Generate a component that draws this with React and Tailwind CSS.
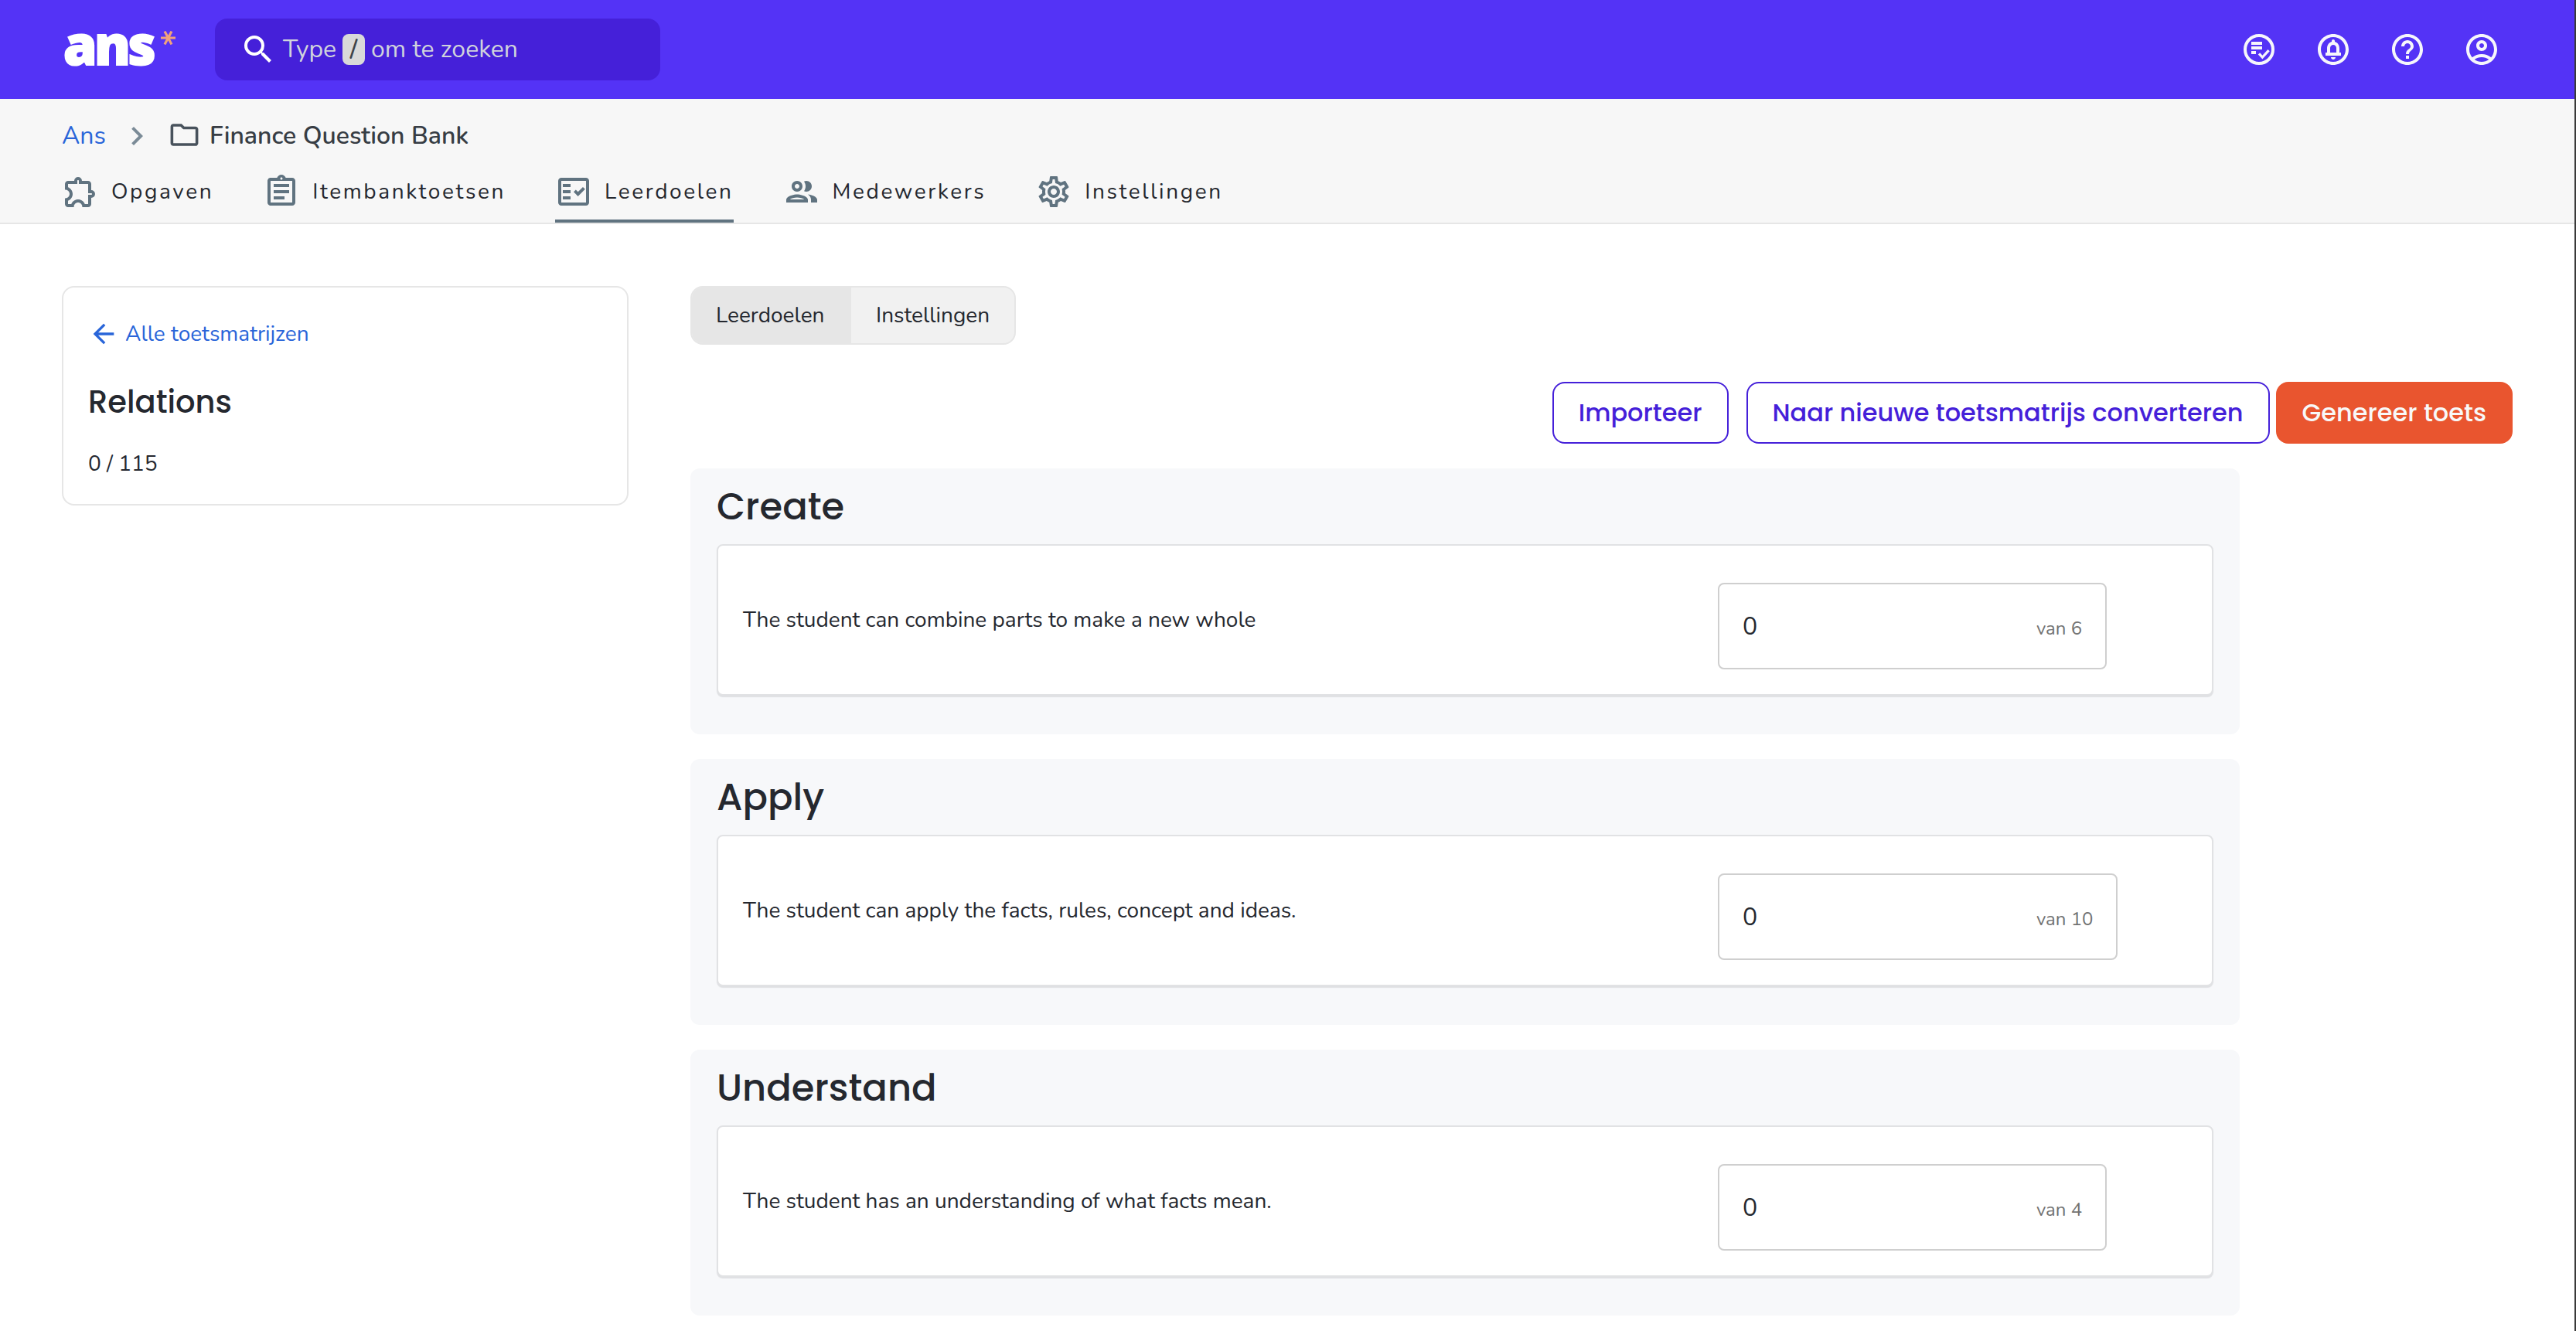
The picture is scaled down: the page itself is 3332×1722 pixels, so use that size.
import React from 'react';
import {
  MdSearch, MdOutlineCircleNotifications, MdHelpOutline, MdOutlineAccountCircle, MdChevronRight,
  MdOutlineFolder, MdOutlineExtension, MdOutlineAssignment, MdOutlineFactCheck, MdOutlineGroup,
  MdOutlineSettings, MdArrowBack,
} from 'react-icons/md';

const tabs = [
  { label: 'Opgaven', icon: MdOutlineExtension },
  { label: 'Itembanktoetsen', icon: MdOutlineAssignment },
  { label: 'Leerdoelen', icon: MdOutlineFactCheck, active: true },
  { label: 'Medewerkers', icon: MdOutlineGroup },
  { label: 'Instellingen', icon: MdOutlineSettings },
];

const categories = [
  { title: 'Create', goal: 'The student can combine parts to make a new whole', total: 6 },
  { title: 'Apply', goal: 'The student can apply the facts, rules, concept and ideas.', total: 10 },
  { title: 'Understand', goal: 'The student has an understanding of what facts mean.', total: 4 },
];

function Logo() {
  return (
    <div className="flex h-full w-[198px] items-center">
      <span className="w-[128px] pb-[14px] pl-[2px] font-['Noto_Sans','Open_Sans',sans-serif] text-[70px] leading-none font-black tracking-[-3.5px] text-white [-webkit-text-stroke:2px_white]">ans</span>
      <svg className="mt-10 h-[18px] w-[19px] self-start" viewBox="0 0 19 18" stroke="#f0a27c" strokeWidth="3.2">
        <path d="M0 9h19M5 .6l9 16.8M14 .6L5 17.4" />
      </svg>
    </div>
  );
}

// Circle with a list and a check mark
function TasksIcon() {
  return (
    <svg className="size-12" viewBox="0 0 24 24" fill="none" stroke="currentColor">
      <circle cx="12" cy="12" r="9" strokeWidth="2" />
      <path d="M7 8h7M7 11h7M7 14h3" strokeWidth="2" />
      <path d="M12 14.7l2.2 2.4 4.1-4.5" strokeWidth="1.6" />
    </svg>
  );
}

function TopBar() {
  return (
    <header className="flex h-32 items-center bg-[#5433f6] pr-24 pl-20">
      <Logo />
      <div className="flex h-20 w-[576px] items-center rounded-[16px] bg-[#4520d9] pl-8 text-[32px] text-[#d0d3dc]">
        <MdSearch className="size-12 text-white" />
        <div className="ml-2 flex items-center gap-2">
          <span>Type</span>
          <kbd className="flex h-10 w-[29px] items-center justify-center rounded-lg bg-[#d9d9d9] font-['Nunito','Lato',sans-serif] font-semibold text-[#3d4348]">/</kbd>
          <span>om te zoeken</span>
        </div>
      </div>
      <div className="ml-auto flex gap-12 text-[#f6f6fb]">
        <TasksIcon />
        <MdOutlineCircleNotifications className="size-12" />
        <MdHelpOutline className="size-12" />
        <MdOutlineAccountCircle className="size-12" />
      </div>
    </header>
  );
}

function SubHeader() {
  return (
    <div className="h-[162px] border-b-2 border-[#e6e6e6] bg-[#f7f7f7] px-20 pt-6">
      <div className="flex h-12 items-center text-[32px]">
        <a className="w-[73px] text-[#2965d9]">Ans</a>
        <MdChevronRight className="size-12 text-[#7b8b97]" />
        <MdOutlineFolder className="mb-1 ml-4 size-[43px] text-[#48525c]" />
        <span className="ml-[11px] font-semibold text-[#373d44]">Finance Question Bank</span>
      </div>
      <nav className="mt-6 flex gap-16">
        {tabs.map(({ label, icon: Icon, active }) => (
          <a key={label} className={`flex h-16 items-start gap-4 border-b-4 ${active ? 'border-[#607380]' : 'border-transparent'}`}>
            <Icon className="size-12 text-[#607380]" />
            <span className="text-[28px] leading-[48px] tracking-[2.61px]">{label}</span>
          </a>
        ))}
      </nav>
    </div>
  );
}

function Sidebar() {
  return (
    <aside className="h-[284px] w-[733px] shrink-0 rounded-[16px] border-2 border-[#e6e6e6] px-8 pt-10">
      <a className="flex h-10 items-center gap-2 text-[28px] text-[#2965d9]">
        <MdArrowBack className="size-10" />
        Alle toetsmatrijzen
      </a>
      <h2 className="mt-[38px] font-['Poppins','Inter',sans-serif] text-[40px] leading-[60px] font-medium">Relations</h2>
      <p className="mt-[29px] text-[28px] leading-[42px]">0 / 115</p>
    </aside>
  );
}

function Category({ title, goal, total }) {
  return (
    <section className="h-[344px] w-[2004px] rounded-[12px] bg-[#f7f8fa] px-[34px]">
      <h1 className="pt-px font-['Poppins','Inter',sans-serif] text-[48px] leading-[97px] font-medium">{title}</h1>
      <div className="flex h-[196px] rounded-lg border-2 border-[#e1e2e4] bg-white pl-8 shadow-[0_2px_1px_#dfe0e3]">
        <p className="w-[1261px] self-center text-[28px]">{goal}</p>
        <div className="mt-12 flex h-[112px] items-baseline rounded-lg border-2 border-[#cfcfcf] px-[30px]">
          <input className="h-[108px] w-[380px] text-[32px] outline-none" defaultValue="0" />
          <span className="text-[24px] text-[#737373]">van {total}</span>
        </div>
      </div>
    </section>
  );
}

export default function App() {
  return (
    <div className="h-[1722px] overflow-hidden border-r-2 border-[#3a3a3a] bg-white font-['Nunito','Lato',sans-serif] text-[#25282f]">
      <TopBar />
      <SubHeader />
      <div className="flex gap-20 p-20">
        <Sidebar />
        <main className="flex-1">
          <div className="flex h-[76px] w-[421px] overflow-hidden rounded-[16px] border-2 border-[#e6e6e6] bg-[#f1f1f1] text-[28px] leading-[72px]">
            <span className="w-[206px] bg-[#e6e6e6] pl-[31px]">Leerdoelen</span>
            <span className="pl-8">Instellingen</span>
          </div>
          <div className="mt-12 flex justify-end font-['Poppins','Inter',sans-serif] text-[32px] font-medium">
            <button className="h-20 rounded-[16px] border-2 border-[#4520d9] px-8 text-[#4520d9]">Importeer</button>
            <button className="ml-[23px] h-20 rounded-[16px] border-2 border-[#4520d9] px-8 text-[#4520d9]">Naar nieuwe toetsmatrijs converteren</button>
            <button className="ml-2 h-20 rounded-[16px] border-2 border-[#e9552f] bg-[#e9552f] px-8 text-[#f8f8f8]">Genereer toets</button>
          </div>
          <div className="mt-8 flex flex-col gap-8">
            {categories.map((c) => <Category key={c.title} {...c} />)}
          </div>
        </main>
      </div>
    </div>
  );
}
